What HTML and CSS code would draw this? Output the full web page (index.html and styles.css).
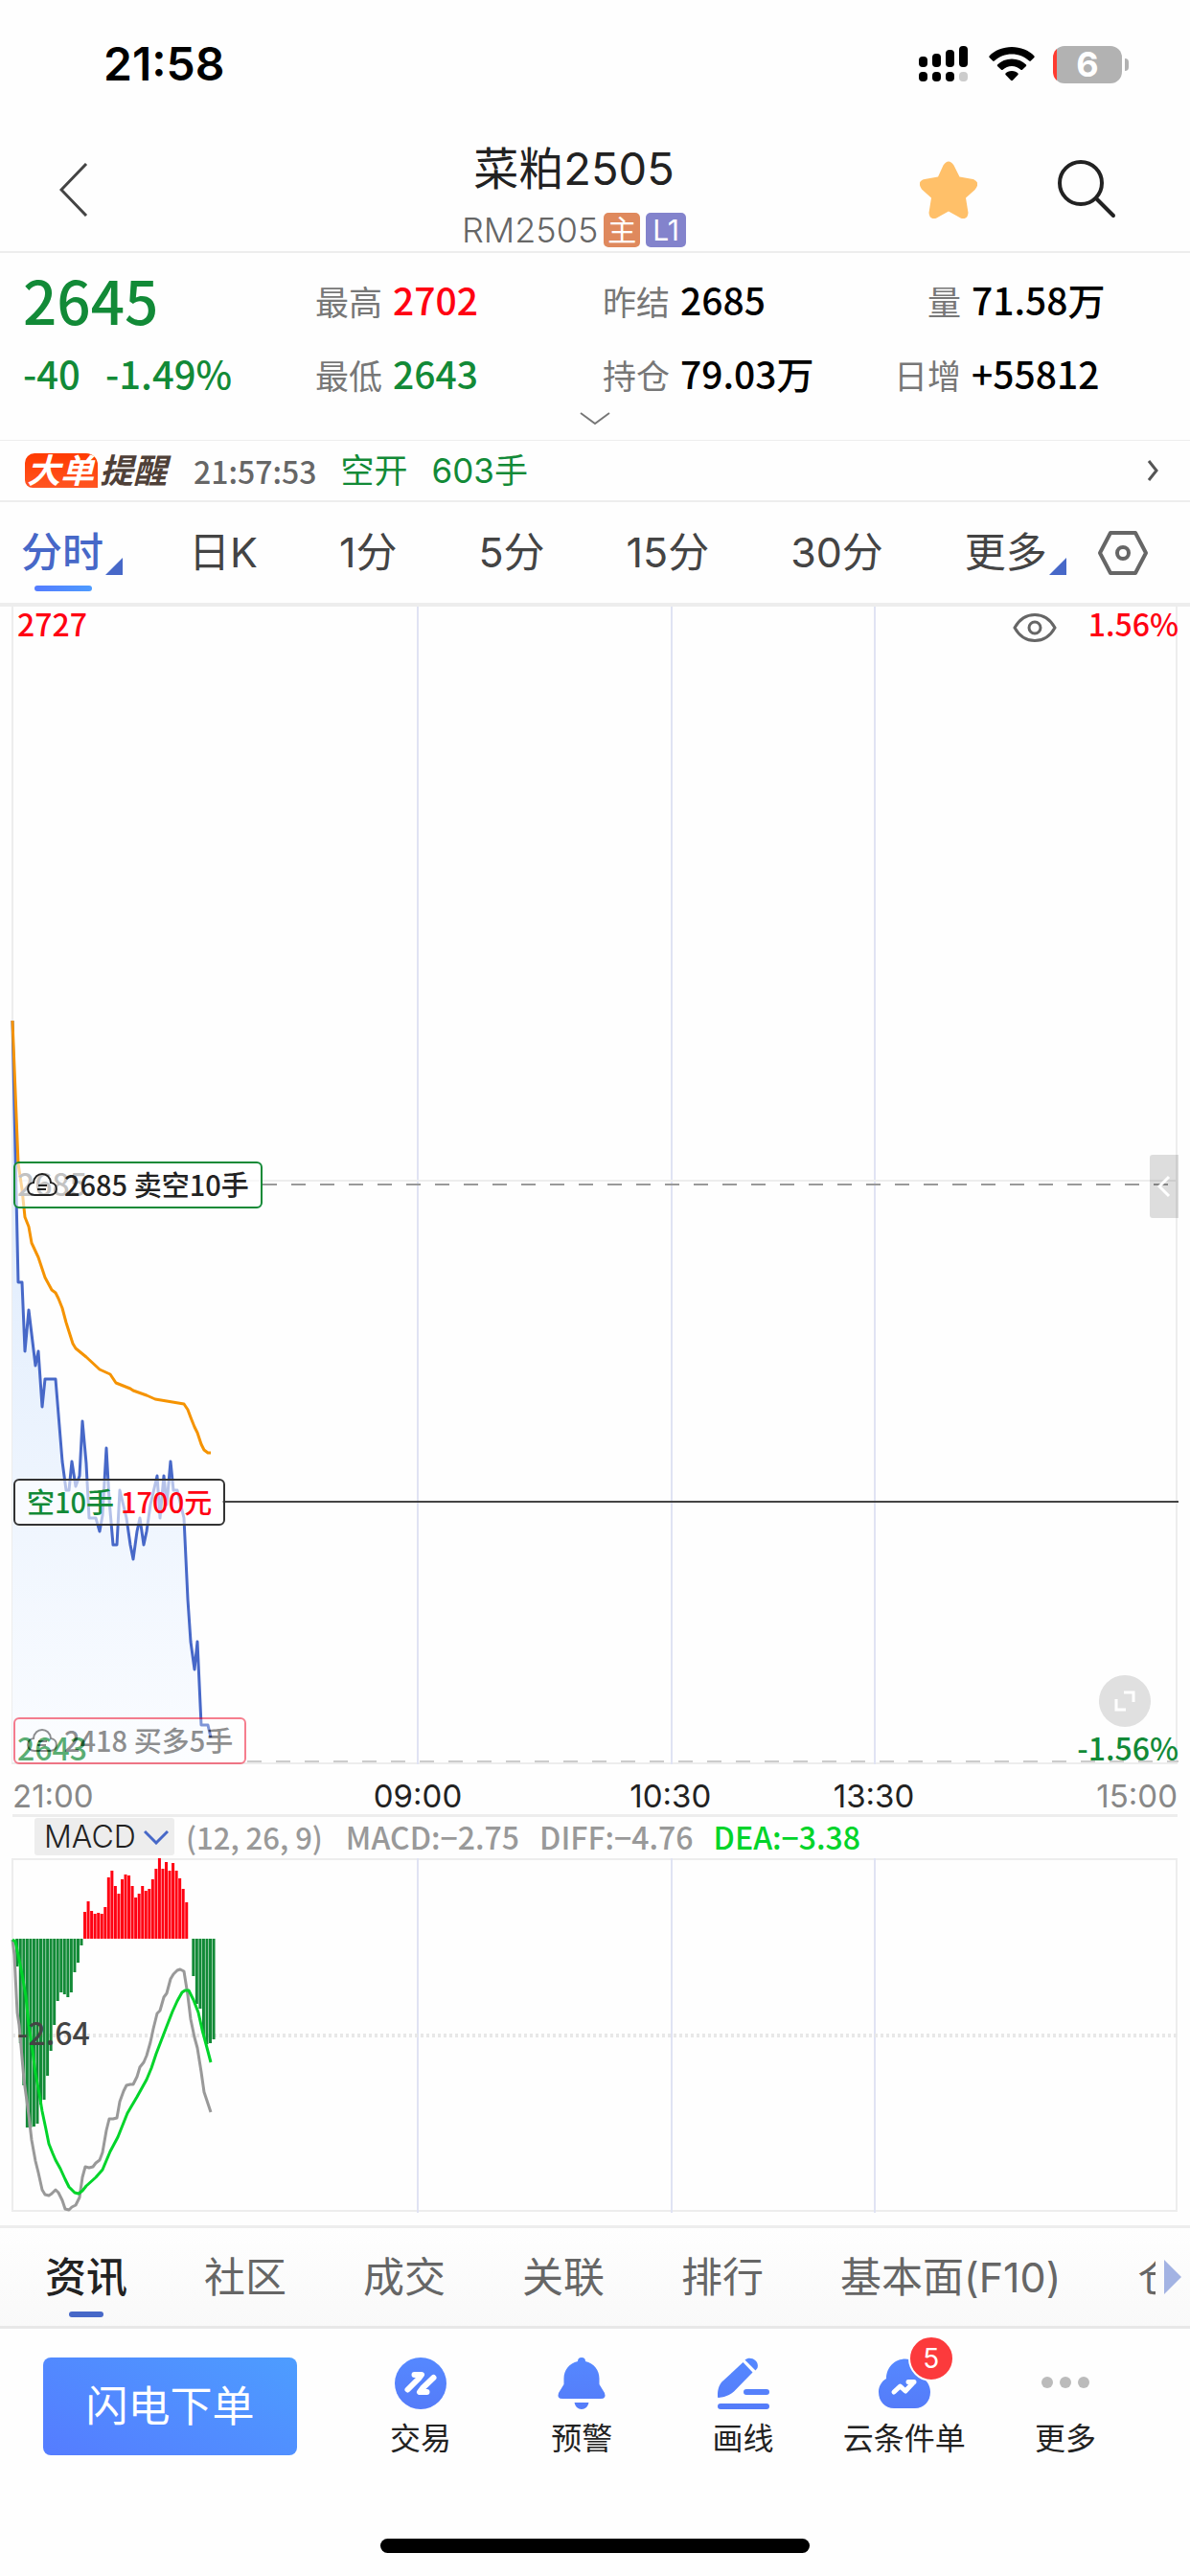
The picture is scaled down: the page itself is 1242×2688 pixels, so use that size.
FILE: index.html
```html
<!DOCTYPE html>
<html lang="zh-CN">
<head>
    <meta charset="UTF-8">
    <meta name="viewport" content="width=device-width, initial-scale=1">
    <title>菜粕2505</title>
    <link rel="stylesheet" href="styles.css">
</head>
<body>
    <!-- 状态栏 -->
    <div class="status">
        <span class="clock">21:58</span>
        <svg class="signal" width="51" height="38" viewBox="0 0 51 38">
            <rect x="0" y="11" width="9" height="11" rx="4"/>
            <rect x="14" y="8" width="9" height="14" rx="4"/>
            <rect x="28" y="4" width="9" height="18" rx="4"/>
            <rect x="42" y="0" width="9" height="22" rx="4"/>
            <rect x="0" y="27" width="9" height="10" rx="4"/>
            <rect x="14" y="27" width="9" height="10" rx="4"/>
            <rect x="28" y="27" width="9" height="10" rx="4"/>
            <rect x="42" y="27" width="9" height="10" rx="4" fill="#ccc"/>
        </svg>
        <svg class="wifi" width="48" height="38" viewBox="0 0 48 38">
            <path d="M24 1C33 1 42 4.500 47.500 10.500Q48 11.300 47.400 12L43.800 15.600Q43 16.200 42.200 15.500C37 11 31 8.500 24 8.500S11 11 5.800 15.500Q5 16.200 4.200 15.600L.6 12Q0 11.300.5 10.500C6 4.500 15 1 24 1Z"/>
            <path d="M24 13.500C30 13.500 35 15.800 39 19.500Q39.500 20.200 39 20.900L35 24.800Q34.200 25.400 33.400 24.800C30.700 22.400 27.500 21 24 21S17.300 22.400 14.600 24.800Q13.800 25.400 13 24.800L9 20.900Q8.500 20.200 9 19.500C13 15.800 18 13.500 24 13.500Z"/>
            <path d="M24 26C27 26 29 27 30.500 28.400Q31 29.200 30.500 30L25 35.800Q24 36.600 23 35.800L17.500 30Q17 29.200 17.500 28.400C19 27 21 26 24 26Z"/>
        </svg>
        <span class="battery">6</span>
    </div>

    <!-- 标题 -->
    <header class="head">
        <button class="icon-btn" aria-label="返回">
            <svg width="30" height="56" viewBox="0 0 30 56"><path d="M28 1L2 28L28 55" fill="none" stroke="#444" stroke-width="3"/></svg>
        </button>
        <div class="name">
            <h1>菜粕2505</h1>
            <p>RM2505<span class="mark main">主</span><span class="mark level">L1</span></p>
        </div>
        <div class="tools">
            <button class="icon-btn" aria-label="自选">
                <svg width="60" height="60" viewBox="0 0 60 60"><path d="M24.500 4.500Q30-3.500 35.500 4.500L41.500 16.500L55.500 19Q64 22 57.500 30L48 38.500L50.500 54Q50 61.500 43 59.800L30 52.500L17 59.800Q10 61.500 9.500 54L12 38.500L2 29.500Q-3.500 21 5 19L19 16.500Z" fill="#ffc069"/></svg>
            </button>
            <button class="icon-btn" aria-label="搜索">
                <svg width="62" height="62" viewBox="0 0 62 62"><g fill="none" stroke="#222" stroke-width="4" stroke-linecap="round"><circle cx="24" cy="24" r="22"/><path d="M40 40L58 58"/></g></svg>
            </button>
        </div>
    </header>

    <!-- 报价 -->
    <section class="quote">
        <div class="price down">2645</div>
        <div><span class="label">最高</span><b class="up">2702</b></div>
        <div><span class="label">昨结</span><b>2685</b></div>
        <div><span class="label wide">量</span><b>71.58万</b></div>
        <div class="change down"><span>-40</span><span>-1.49%</span></div>
        <div><span class="label">最低</span><b class="down">2643</b></div>
        <div><span class="label">持仓</span><b>79.03万</b></div>
        <div><span class="label wide">日增</span><b>+55812</b></div>
        <button class="more-quote" aria-label="展开">
            <svg width="32" height="14" viewBox="0 0 32 14"><path d="M1 1L16 12L31 1" fill="none" stroke="#777" stroke-width="2"/></svg>
        </button>
    </section>

    <a class="alert" href="#">
        <span class="big">大单</span><span class="tip">提醒</span>
        <span class="at">21:57:53</span>
        <span class="down">空开</span>
        <span class="down">603手</span>
        <svg width="12" height="22" viewBox="0 0 12 22"><path d="M2 1L10 11L2 21" fill="none" stroke="#555" stroke-width="3"/></svg>
    </a>

    <nav class="periods">
        <button class="on drop">分时</button>
        <button>日K</button>
        <button>1分</button>
        <button>5分</button>
        <button>15分</button>
        <button>30分</button>
        <button class="drop">更多</button>
        <button class="setting" aria-label="设置">
            <svg width="54" height="46" viewBox="0 0 54 46"><g fill="none" stroke="#666" stroke-width="4" stroke-linejoin="round"><path d="M14 2H40L51 23L40 44H14L3 23Z"/><circle cx="27" cy="23" r="6"/></g></svg>
        </button>
    </nav>

    <!-- 分时图 -->
    <section class="chart">
        <svg class="plot" viewBox="0 0 1242 1208">
            <defs>
                <linearGradient id="fill" x1="0" y1="0" x2="0" y2="1">
                    <stop offset="0" stop-color="#d9e8fc"/>
                    <stop offset="1" stop-color="#fafcff"/>
                </linearGradient>
            </defs>
            <path d="M13 0V1207H1228V0" class="frame"/>
            <path d="M436 0V1208M701 0V1208M913 0V1208" class="grid"/>
            <path d="M13 599H1228" class="frame"/>
            <path id="area" fill="url(#fill)"/>
            <polyline id="price" class="line blue" points="13,432 19,705 23,705 26,777 30,734 37,792 40,777 44,835 47,806 58,806 65,892 69,922 72,922 75,892 79,918 83,907 86,850 90,894 93,951 100,951 104,965 107,948 111,878 114,932 118,979 122,979 125,922 132,951 136,979 139,994 143,965 146,951 150,979 153,965 157,937 164,907 167,951 171,907 174,937 178,892 181,922 185,922 192,951 196,1036 199,1080 203,1109 206,1080 210,1167 217,1167 220,1180"/>
            <polyline class="line orange" points="13,432 19,581 23,608 26,637 30,647 33,664 40,679 47,700 54,713 58,716 61,722 65,732 69,747 76,769 79,774 90,783 104,796 115,801 121,810 136,816 139,818 153,823 162,827 192,832 196,838 199,846 203,856 206,862 210,874 213,880 217,883 220,883"/>
            <path d="M274 603H1228" class="dash"/>
            <path d="M258 1205H1230" class="dash pale"/>
            <path d="M232 934H1230" stroke="#444" stroke-width="2"/>
        </svg>
        <span class="axis top-left up">2727</span>
        <span class="axis top-right up">1.56%</span>
        <span class="axis mid-left">2685</span>
        <span class="axis bottom-left down">2643</span>
        <span class="axis bottom-right down">-1.56%</span>
        <button class="eye" aria-label="显示">
            <svg width="46" height="32" viewBox="0 0 46 32"><g fill="none" stroke="#666" stroke-width="3"><path d="M2 16C12-2 34-2 44 16C34 34 12 34 2 16Z"/><circle cx="23" cy="16" r="6"/></g></svg>
        </button>
        <div class="tag short">
            <svg width="32" height="26" viewBox="0 0 32 26"><path d="M8 24C-1 24-1 12 7 11C8-1 24-1 25 11C33 12 33 24 24 24ZM12 14H21M11 18H20" fill="none" stroke="#222" stroke-width="2"/></svg>
            2685 卖空10手
        </div>
        <div class="tag hold"><span class="down">空10手</span> <span class="up">1700元</span></div>
        <div class="tag long">
            <svg width="32" height="26" viewBox="0 0 32 26"><path d="M8 24C-1 24-1 12 7 11C8-1 24-1 25 11C33 12 33 24 24 24ZM12 14H21M11 18H20" fill="none" stroke="#222" stroke-width="2"/></svg>
            2418 买多5手
        </div>
        <button class="side" aria-label="盘口">
            <svg width="14" height="24" viewBox="0 0 14 24"><path d="M12 2L2 12L12 22" fill="none" stroke="#fff" stroke-width="3"/></svg>
        </button>
        <button class="full" aria-label="全屏">
            <svg width="22" height="22" viewBox="0 0 22 22"><path d="M10 2H20V12M2 9V20H12" fill="none" stroke="#fff" stroke-width="3"/></svg>
        </button>
    </section>
    <div class="times">
        <span>21:00</span>
        <span>09:00</span>
        <span>10:30</span>
        <span>13:30</span>
        <span>15:00</span>
    </div>

    <!-- MACD -->
    <div class="indicator">
        <label class="pick">
            <select aria-label="指标"><option>MACD</option></select>
            <svg width="26" height="16" viewBox="0 0 26 16"><path d="M1 2L13 14L25 2" fill="none" stroke="#4768c8" stroke-width="3"/></svg>
        </label>
        <span class="args">(12, 26, 9)</span>
        <span class="macd">MACD:−2.75</span>
        <span class="diff">DIFF:−4.76</span>
        <span class="dea">DEA:−3.38</span>
    </div>
    <section class="chart sub">
        <svg class="plot" viewBox="0 0 1242 370">
            <path d="M13 1H1228V368H13Z" class="frame"/>
            <path d="M436 0V370M701 0V370M913 0V370" class="grid"/>
            <path d="M13 185H1228" class="dots"/>
            <path id="down" fill="#128a37"/>
            <path id="up" fill="#ff0012"/>
            <polyline class="line grey" points="13,85 15,101 18,161 20,174 25,231 30,268 33,294 37,316 40,328 44,346 47,351 51,352 54,350 58,346 61,349 65,357 68,366 72,367 75,364 79,362 83,354 86,333 89,322 93,323 97,322 100,318 104,315 107,307 111,284 114,272 118,272 122,271 125,254 129,243 132,237 136,236 139,236 143,228 146,218 150,213 153,206 157,192 160,178 164,162 167,159 171,145 174,141 178,126 181,121 185,117 188,116 192,118 196,143 199,168 203,187 206,198 210,223 213,244 220,265"/>
            <polyline class="line green" points="13,85 16,87 19,101 23,121 27,144 30,174 34,201 37,224 41,246 44,264 48,283 51,298 55,308 58,315 63,324 68,335 72,343 78,349 82,350 86,347 90,342 100,333 107,325 115,306 123,291 133,266 143,249 153,231 158,219 163,204 168,191 173,178 180,160 185,149 190,140 193,138 197,138 202,148 207,161 211,179 215,194 220,213"/>
        </svg>
        <span class="axis zero">-2.64</span>
    </section>

    <nav class="tabs">
        <a href="#" class="on">资讯</a>
        <a href="#">社区</a>
        <a href="#">成交</a>
        <a href="#">关联</a>
        <a href="#">排行</a>
        <a href="#">基本面(F10)</a>
        <a href="#" class="cut">仓单</a>
        <svg width="18" height="36" viewBox="0 0 18 36"><path d="M0 0L18 18L0 36Z" fill="#a3b3e3"/></svg>
    </nav>

    <footer class="bar">
        <svg class="defs" width="0" height="0">
            <linearGradient id="ico" x1="0" y1="0" x2="0" y2="1">
                <stop offset="0" stop-color="#5588ff"/>
                <stop offset="1" stop-color="#557cf9"/>
            </linearGradient>
        </svg>
        <button class="order">闪电下单</button>
        <a href="#" class="item">
            <svg width="54" height="54" viewBox="0 0 54 54"><circle cx="27" cy="27" r="27" fill="url(#ico)"/><path d="M13.500 33.500L25 22L28 18H20.500M40.500 21L29 32L26 36H33.500" fill="none" stroke="#fff" stroke-width="6" stroke-linecap="round" stroke-linejoin="round"/></svg>
            交易
        </a>
        <a href="#" class="item">
            <svg width="54" height="54" viewBox="0 0 54 54"><path d="M23 4Q23 0 27 0T31 4C40 6 45.500 13 45.500 22V28L51 37Q53 43 47 43H7Q1 43 3 37L8.500 28V22C8.500 13 14 6 23 4ZM19.500 47H34.500Q33 54 27 54T19.500 47Z" fill="url(#ico)"/></svg>
            预警
        </a>
        <a href="#" class="item">
            <svg width="54" height="54" viewBox="0 0 54 54"><path d="M26.500 5L36.500 15.500L17 35.500C12 40 5 42 1 42Q-1 42 0 38C0 33 2 27 6 24ZM28.500 2.500C34-2 44 3 41.500 11L39.500 13.500ZM30 33H51A3 3 0 0 1 51 39H30A3 3 0 0 1 30 33ZM3 48H51A3 3 0 0 1 51 54H3A3 3 0 0 1 3 48Z" fill="url(#ico)"/></svg>
            画线
        </a>
        <a href="#" class="item">
            <svg width="54" height="54" viewBox="0 0 54 54"><path d="M8 22C8 10 17 1.500 28 1.500C39 1.500 46 10 46.500 21C51 25 54 30 54 36C54 46 47 53 38 53H16C7 53 0 46 0 36C0 30 3 25 8 22Z" fill="url(#ico)"/><path d="M16 36L22.500 30L28 35L36 26.500M31 25.500H37" fill="none" stroke="#fff" stroke-width="5" stroke-linecap="round" stroke-linejoin="round"/></svg>
            <span class="count">5</span>
            云条件单
        </a>
        <a href="#" class="item">
            <svg width="54" height="54" viewBox="0 0 54 54" fill="#bbb"><circle cx="8" cy="26" r="6"/><circle cx="27" cy="26" r="6"/><circle cx="46" cy="26" r="6"/></svg>
            更多
        </a>
    </footer>
    <div class="home"></div>
    <script src="chart.js"></script>
</body>
</html>
```
FILE: styles.css
```css
*{
    box-sizing:border-box;
    margin:0;
    padding:0;
}
body{
    display:flex;
    flex-direction:column;
    min-height:100vh;
    background:#fefefe;
    color:#222;
    font-family:Inter,"Noto Sans CJK SC",sans-serif;
    font-weight:400;
    overflow-x:hidden;
}
button,select{
    border:0;
    background:none;
    font:inherit;
    color:inherit;
    appearance:none;
}
a{
    color:inherit;
    text-decoration:none;
}
svg{
    display:block;
    flex:none;
}
.up{
    color:#ff0012;
}
.down{
    color:#128a37;
}

/* 状态栏 */
.status{
    display:flex;
    align-items:center;
    padding:42px 64px 30px 108px;
    line-height:50px;
    color:#000;
}
.clock{
    flex:1;
    font-size:48px;
    font-weight:600;
}
.wifi{
    margin:0 19px 0 22px;
}
.battery{
    position:relative;
    width:72px;
    margin-right:7px;
    border-radius:12px;
    background:linear-gradient(to right,#ff3b30 4px,#b2b2b2 4px);
    color:#fff;
    font-size:36px;
    font-weight:700;
    line-height:39px;
    text-align:center;
}
.battery::after{
    content:"";
    position:absolute;
    left:75px;
    top:13px;
    width:4px;
    height:13px;
    border-radius:0 4px 4px 0;
    background:#b2b2b2;
}

/* 标题 */
.head{
    display:grid;
    grid-template-columns:1fr auto 1fr;
    padding:24px 76px 4px 62px;
    border-bottom:2px solid #ededed;
}
.head .icon-btn{
    align-self:center;
    justify-self:start;
    margin-bottom:8px;
}
.name{
    text-align:center;
    margin-right:30px;
}
.name h1{
    font-size:47px;
    font-weight:400;
    line-height:60px;
}
.name p{
    display:flex;
    justify-content:center;
    gap:6px;
    margin-top:16px;
    color:#666;
    font-size:36px;
    font-weight:300;
    line-height:36px;
}
.mark{
    padding:0 4px;
    border-radius:5px;
    color:#fff;
    font-size:30px;
    font-weight:400;
}
.main{
    background:#df895d;
}
.level{
    padding:0 7px;
    background:#8383cc;
}
.tools{
    display:flex;
    justify-content:flex-end;
    gap:84px;
}

/* 报价 */
.quote,.axis,.tag,.at,.indicator{
    font-family:"Noto Sans CJK SC",sans-serif;
    font-weight:500;
}
.quote{
    display:grid;
    grid-template-columns:305fr 300fr 304fr 309fr;
    grid-template-rows:77px 77px 31px;
    padding:10px 0 0 24px;
    border-bottom:1px solid #ededed;
    font-size:39px;
    line-height:77px;
    white-space:nowrap;
}
.quote b{
    font-weight:500;
}
.quote b:not([class]){
    color:#000;
}
.price{
    font-size:62px;
}
.change{
    display:flex;
    gap:26px;
    font-size:40px;
}
.label{
    margin-right:11px;
    color:#777;
    font-size:35px;
    font-weight:400;
}
.wide{
    display:inline-block;
    width:70px;
    text-align:right;
}
.more-quote{
    grid-column:1 / -1;
    align-self:end;
    justify-self:center;
    margin-left:-24px;
    padding-bottom:15px;
}

/* 大单提醒 */
.alert{
    display:flex;
    align-items:center;
    padding:0 33px 0 26px;
    border-bottom:2px solid #ededed;
    font-size:35px;
    line-height:62px;
}
.alert span{
    margin-right:25px;
}
.alert .big,.alert .tip{
    margin-right:0;
    font-style:italic;
    font-weight:700;
}
.alert .big{
    padding:0 4px 0 2px;
    border-radius:10px 12px 0 8px;
    background:linear-gradient(#ff3a00,#ff5522);
    color:#fff;
    line-height:36px;
}
.alert .tip{
    margin:0 28px 0 2px;
    color:#4f4038;
}
.alert .at{
    color:#666;
    font-size:32px;
}
.alert svg{
    margin-left:auto;
}

/* 周期 */
.periods{
    display:flex;
    gap:85px;
    padding:0 38px 0 22px;
    border-bottom:4px solid #ededed;
    color:#444;
    font-size:43px;
    line-height:105px;
}
.periods button{
    position:relative;
    flex:none;
    white-space:nowrap;
}
.periods .on{
    color:#4768c8;
    font-weight:500;
}
.periods .on::before{
    content:"";
    position:absolute;
    left:14px;
    bottom:12px;
    width:60px;
    height:6px;
    border-radius:3px;
    background:linear-gradient(to right,#557cff,#4d9bff);
}
.drop{
    margin-right:-16px;
}
.drop::after{
    content:"";
    display:inline-block;
    margin:0 0 -8px 2px;
    border-left:18px solid transparent;
    border-bottom:18px solid #4768c8;
}
.periods .setting{
    display:flex;
    align-items:center;
    margin-left:-37px;
}

/* 图表 */
.chart{
    position:relative;
}
.plot{
    width:100%;
}
.frame,.grid,.dash,.dots,.line{
    fill:none;
}
.frame{
    stroke:#ededed;
    stroke-width:2px;
}
.grid{
    stroke:#e0e3f3;
    stroke-width:2px;
}
.dash{
    stroke:#999;
    stroke-width:2px;
    stroke-dasharray:15 15;
}
.pale{
    stroke:#ccc;
}
.dots{
    stroke:#e8e8e8;
    stroke-width:4px;
    stroke-dasharray:3 3;
}
.line{
    stroke-width:3px;
    stroke-linejoin:round;
}
.blue{
    stroke:#4768c8;
}
.orange{
    stroke:#f59300;
}
.grey{
    stroke:#999;
}
.green{
    stroke:#00d42a;
}
.axis{
    position:absolute;
    font-size:32px;
    line-height:40px;
}
.top-left{
    left:18px;
    top:-3px;
}
.top-right{
    right:12px;
    top:-3px;
}
.mid-left{
    left:18px;
    top:581px;
    color:#666;
}
.bottom-left{
    left:18px;
    bottom:-2px;
}
.bottom-right{
    right:12px;
    bottom:-2px;
}
.zero{
    left:18px;
    top:161px;
    color:#444;
}
.eye{
    position:absolute;
    right:139px;
    top:6px;
}
.tag{
    position:absolute;
    left:14px;
    display:flex;
    align-items:center;
    gap:7px;
    padding:0 12px 2px;
    border:2px solid #333;
    border-radius:6px;
    background:rgba(255,255,255,0.6);
    font-size:29px;
    line-height:43px;
}
.short{
    top:579px;
    border-color:#128a37;
}
.hold{
    top:910px;
}
.long{
    bottom:0;
    border-color:#f00020;
    opacity:0.5;
}
.side{
    position:absolute;
    right:12px;
    top:572px;
    display:grid;
    place-items:center;
    width:30px;
    height:66px;
    border-radius:3px 0 0 3px;
    background:rgba(0,0,0,0.13);
}
.full{
    position:absolute;
    right:41px;
    bottom:39px;
    display:grid;
    place-items:center;
    width:54px;
    height:54px;
    border-radius:50%;
    background:#e0e0e0;
}
.times{
    display:grid;
    grid-template-columns:376fr 267fr 212fr 274fr auto;
    margin:0 13px;
    padding-top:14px;
    border-bottom:3px solid #ededed;
    font-size:33px;
    line-height:38px;
}
.times span:first-child,.times span:last-child{
    color:#888;
}

/* 指标 */
.indicator{
    display:flex;
    align-items:center;
    padding:1px 36px 3px;
    color:#999;
    font-size:32px;
    line-height:39px;
}
.pick{
    display:flex;
    align-items:center;
    gap:8px;
    padding:0 6px 0 10px;
    border-radius:3px;
    background:#ededed;
    color:#222;
    font-family:Inter,sans-serif;
    font-weight:300;
}
.args{
    margin-left:12px;
    font-size:31px;
}
.macd{
    margin-left:24px;
}
.diff,.dea{
    margin-left:21px;
}
.dea{
    color:#00d42a;
}

/* 底部标签 */
.tabs{
    display:flex;
    align-items:center;
    gap:80px;
    margin-top:13px;
    padding:0 9px 0 47px;
    border-top:3px solid #ededed;
    border-bottom:3px solid #e8e8e8;
    background:linear-gradient(#fefefe,#f9f9f9);
    color:#666;
    font-size:43px;
    line-height:102px;
    white-space:nowrap;
}
.tabs .on{
    position:relative;
    color:#222;
    font-weight:500;
}
.tabs .on::after{
    content:"";
    position:absolute;
    left:25px;
    bottom:9px;
    width:36px;
    height:6px;
    border-radius:3px;
    background:#4768c8;
}
.cut{
    flex:1;
    width:0;
    overflow:hidden;
}
.tabs svg{
    margin-left:-71px;
}
.bar{
    display:flex;
    padding:30px 46px 0 45px;
    font-size:32px;
    line-height:46px;
}
.defs{
    position:absolute;
}
.order{
    width:265px;
    height:102px;
    margin-right:45px;
    border-radius:8px;
    background:linear-gradient(30deg,#557cff,#4d9dff);
    color:#fff;
    font-size:44px;
}
.item{
    position:relative;
    flex:1;
    display:flex;
    flex-direction:column;
    align-items:center;
    gap:8px;
    white-space:nowrap;
}
.count{
    position:absolute;
    left:50%;
    top:-23px;
    width:48px;
    margin-left:4px;
    border:2px solid #fff;
    border-radius:50%;
    background:#fc3a3c;
    color:#fff;
    font-size:28px;
    line-height:44px;
    text-align:center;
}
.home{
    width:36%;
    height:15px;
    margin:auto auto 24px;
    border-radius:8px;
    background:#000;
}
```
FILE: chart.js
```javascript
// MACD柱，正数红，负数绿
var bars = [0,-29,-109,-153,-197,-197,-196,-193,-173,-168,-143,-117,-90,-65,-56,-58,-61,-56,-35,-25,-7,
    28,39,29,26,27,26,33,64,71,55,47,62,67,66,55,43,47,55,50,52,62,73,84,73,80,71,79,71,63,52,38,
    0,-39,-68,-73,-100,-110,-109,-105];
var zero = 84;
var up = "";
var down = "";

for(var i=0;i<bars.length;i++){
    var d = "M"+(12.7+i*3.54)+" "+zero+"v"+(-bars[i])+"h3V"+zero+"Z";
    if(bars[i]>0){
        up += d;
    }else if(bars[i]<0){
        down += d;
    }
}
document.getElementById("up").setAttribute("d",up);
document.getElementById("down").setAttribute("d",down);

//价格线下方填充
var points = document.getElementById("price").getAttribute("points");
document.getElementById("area").setAttribute("d","M13 1206L"+points+" 220 1206Z");
```
